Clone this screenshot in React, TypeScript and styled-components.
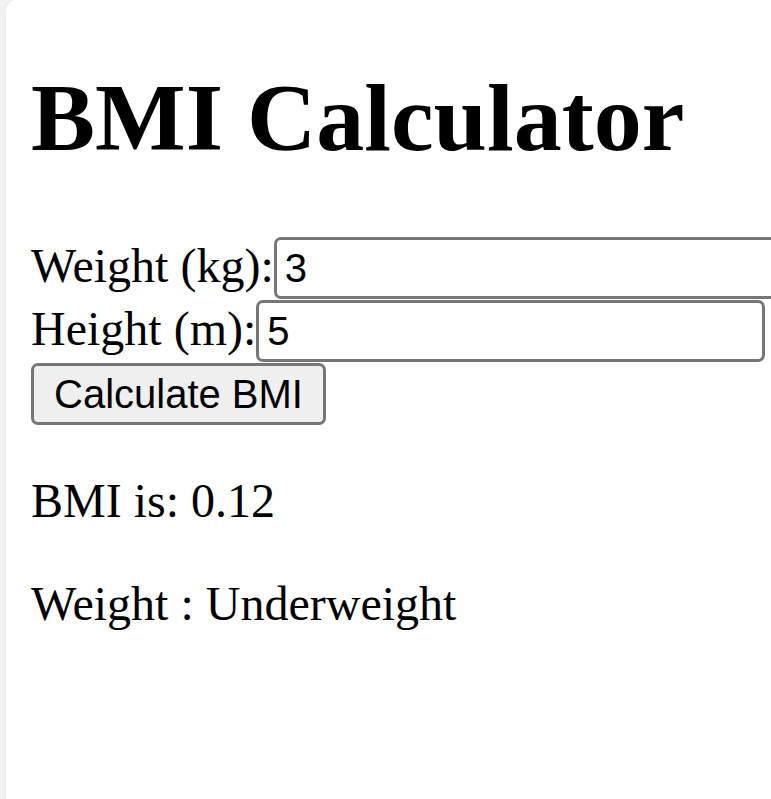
import React from "react";
import styled, { createGlobalStyle } from "styled-components";

const GlobalStyle = createGlobalStyle`
  html, body {
    margin: 0;
    padding: 0;
    background: #f2f2f2;
    overflow: hidden;
  }
  body {
    font-family: "Liberation Serif", "Times New Roman", serif;
  }
`;

const Page = styled.div`
  display: flex;
  min-height: 799px;
  padding-left: 6px;
`;

const Card = styled.main`
  flex: 1;
  background: #ffffff;
  border-radius: 10px 0 0 0;
  box-shadow: -1px 0 2px rgba(0, 0, 0, 0.04);
  padding: 62px 0 0 25px;
  min-height: 799px;
  box-sizing: border-box;
  overflow: hidden;
`;

const Title = styled.h1`
  font-family: "Liberation Serif", "Times New Roman", serif;
  font-size: 96px;
  font-weight: bold;
  line-height: normal;
  margin: 0 0 64px 0;
  color: #000;
  white-space: nowrap;
`;

const Form = styled.form`
  display: flex;
  flex-direction: column;
  align-items: flex-start;
  gap: 1px;
`;

const Row = styled.div`
  display: flex;
  align-items: baseline;
  white-space: nowrap;
`;

const Label = styled.label`
  font-family: "Liberation Serif", "Times New Roman", serif;
  font-size: 48px;
  line-height: normal;
  color: #000;
`;

const Field = styled.input`
  box-sizing: border-box;
  width: 509px;
  height: 62px;
  flex: none;
  margin: 0;
  padding: 0 8px;
  border: 3px solid #767676;
  border-radius: 7px;
  background: #fff;
  font-family: "Liberation Sans", Arial, sans-serif;
  font-size: 40px;
  color: #000;
  outline: none;
`;

const Button = styled.button`
  box-sizing: border-box;
  width: 295px;
  height: 62px;
  margin: 0;
  padding: 0 18px;
  border: 3px solid #767676;
  border-radius: 7px;
  background: #efefef;
  font-family: "Liberation Sans", Arial, sans-serif;
  font-size: 40px;
  color: #000;
  cursor: pointer;
`;

const Result = styled.p`
  font-family: "Liberation Serif", "Times New Roman", serif;
  font-size: 48px;
  line-height: normal;
  margin: 48px 0 0 0;
  color: #000;
  white-space: nowrap;
`;

export default function App() {
  return (
    <>
      <GlobalStyle />
      <Page>
        <Card>
          <Title>BMI Calculator</Title>
          <Form onSubmit={(e) => e.preventDefault()}>
            <Row>
              <Label htmlFor="weight">Weight (kg):</Label>
              <Field id="weight" type="text" defaultValue="3" />
            </Row>
            <Row>
              <Label htmlFor="height">Height (m):</Label>
              <Field id="height" type="text" defaultValue="5" />
            </Row>
            <Button type="submit">Calculate BMI</Button>
          </Form>
          <Result>BMI is: 0.12</Result>
          <Result>Weight : Underweight</Result>
        </Card>
      </Page>
    </>
  );
}
